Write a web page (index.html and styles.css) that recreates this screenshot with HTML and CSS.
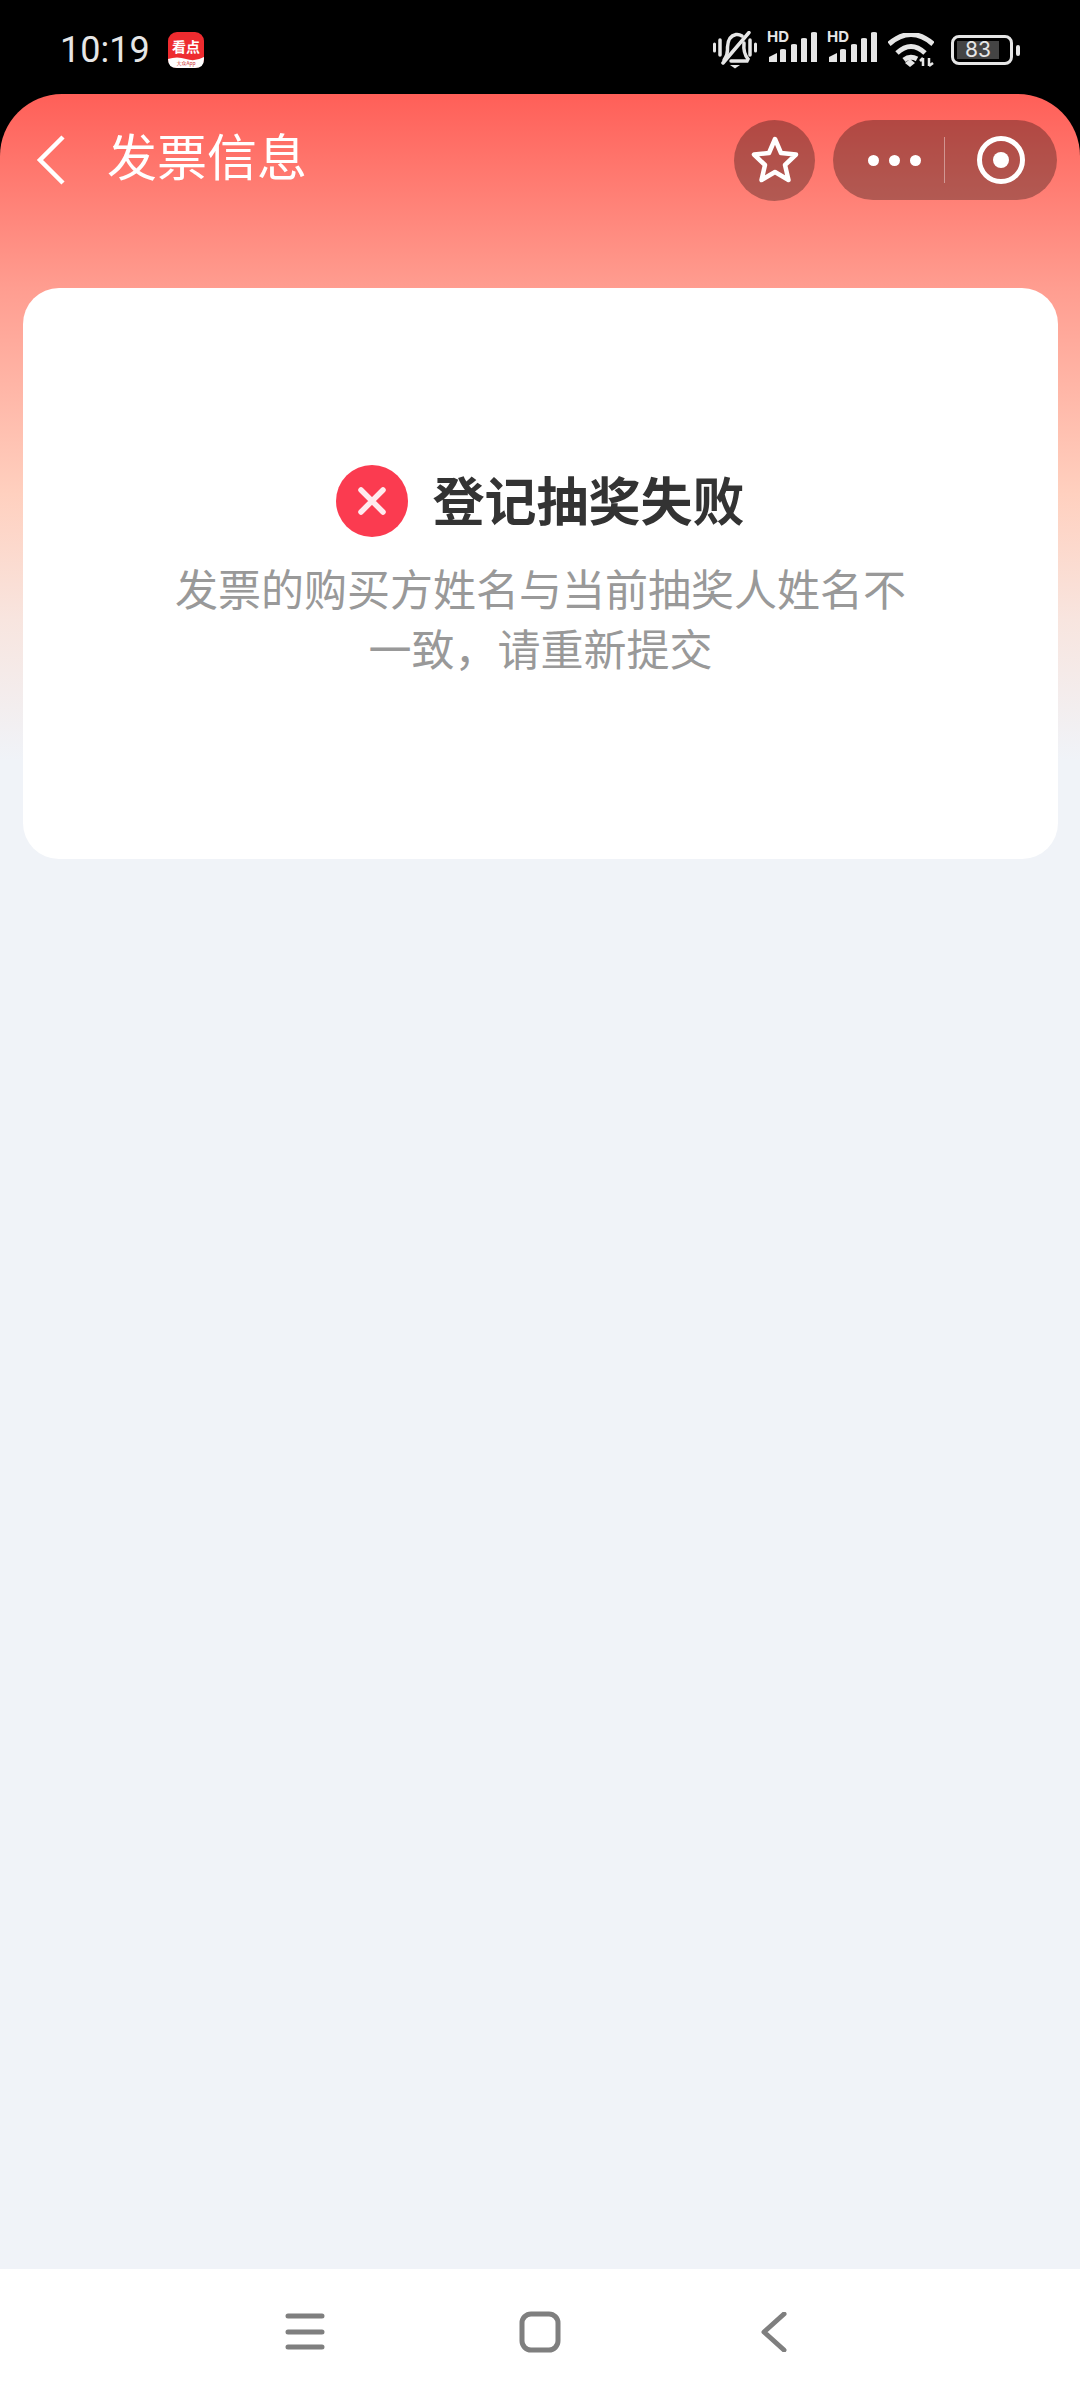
FILE: index.html
```html
<!DOCTYPE html>
<html lang="zh-CN">
<head>
    <meta charset="UTF-8">
    <meta name="viewport" content="width=device-width, initial-scale=1.0">
    <title>发票信息</title>
    <link rel="stylesheet" href="styles.css">
</head>
<body>
    <!-- Barra de estado -->
    <div class="status-bar">
        <span class="time">10:19</span>
        <svg class="app-icon" width="36" height="36" viewBox="0 0 36 36">
            <rect width="36" height="36" rx="9" fill="#ee2b2f"/>
            <path d="M0 27 Q9 24 18 27 T36 25 V27 Q36 36 27 36 H9 Q0 36 0 27 Z" fill="#fff"/>
            <text x="18" y="20" class="app-icon-text" text-anchor="middle">看点</text>
            <text x="18" y="33" class="app-icon-small" text-anchor="middle">大众App</text>
        </svg>
        <div class="status-icons">
            <svg class="icon-bell" width="44" height="38" viewBox="0 0 44 38" fill="none" stroke="#e6e6e6" stroke-linecap="round">
                <path d="M1.5 13 V20 M42.5 13 V20" stroke-width="3"/>
                <path d="M7 9 V24 M37 9 V24" stroke-width="3.5"/>
                <path d="M11 29 Q15 24 14.5 16 Q15 5 23 3.5 Q26 3 29 5 M31 12 Q30 22 35 28 L34 30 H18" stroke-width="3.5"/>
                <path d="M10 32 L36 1.5" stroke-width="3.5"/>
                <path d="M17 34 H27 L22 37.5 Z" fill="#e6e6e6" stroke="none"/>
            </svg>
            <svg class="icon-signal" width="50" height="42" viewBox="0 -4 50 42">
                <text x="0" y="13" class="hd-text">HD</text>
                <path d="M2 33 V28 L10 24 V33 Z M13 33 V21 Q13 20 16 20 Q19 20 19 21 V33 Z M24 33 V16 Q24 15 27 15 Q30 15 30 16 V33 Z M34 33 V10 Q34 9 37 9 Q40 9 40 10 V33 Z M44 33 V4 Q44 3 47 3 Q50 3 50 4 V33 Z" fill="#e6e6e6"/>
            </svg>
            <svg class="icon-signal" width="50" height="42" viewBox="0 -4 50 42">
                <text x="0" y="13" class="hd-text">HD</text>
                <path d="M2 33 V28 L10 24 V33 Z M13 33 V21 Q13 20 16 20 Q19 20 19 21 V33 Z M24 33 V16 Q24 15 27 15 Q30 15 30 16 V33 Z M34 33 V10 Q34 9 37 9 Q40 9 40 10 V33 Z M44 33 V4 Q44 3 47 3 Q50 3 50 4 V33 Z" fill="#e6e6e6"/>
            </svg>
            <svg class="icon-wifi" width="46" height="34" viewBox="0 0 46 34" fill="none" stroke="#e6e6e6" stroke-width="5">
                <path d="M1 11 Q23 -8 45 11"/>
                <path d="M9 20 Q23 7 37 20"/>
                <path d="M16 27 Q22 22 29 26"/>
                <path d="M17 30 L22 26 L27 30 L22 34 Z" fill="#e6e6e6" stroke="none"/>
                <path d="M35 25 V33 M32 28 L35 25 M41 25 V33 M41 33 L45 30" stroke-width="2.5"/>
            </svg>
            <div class="battery">
                <div class="battery-body">
                    <span class="battery-level">83</span>
                </div>
                <div class="battery-tip"></div>
            </div>
        </div>
    </div>

    <div class="page">
        <!-- Cabecera -->
        <header class="top-bar">
            <svg class="back-icon" width="30" height="50" viewBox="0 0 30 50" fill="none" stroke="#fff" stroke-width="4.5">
                <path d="M27 2 L4 25 L27 48"/>
            </svg>
            <h1 class="page-title">发票信息</h1>
            <div class="fav-button">
                <svg width="50" height="50" viewBox="0 0 50 50" fill="none" stroke="#fff" stroke-width="4.5" stroke-linejoin="round">
                    <path d="M25 4 L31 18 L46 19.5 L35 30 L38.5 45 L25 37 L11.5 45 L15 30 L4 19.5 L19 18 Z"/>
                </svg>
            </div>
            <div class="capsule">
                <div class="capsule-dots">
                    <span class="dot"></span>
                    <span class="dot"></span>
                    <span class="dot"></span>
                </div>
                <div class="capsule-line"></div>
                <div class="capsule-target">
                    <span class="target-dot"></span>
                </div>
            </div>
        </header>

        <!-- Resultado -->
        <section class="result-card">
            <div class="result-head">
                <svg width="72" height="72" viewBox="0 0 72 72">
                    <circle cx="36" cy="36" r="36" fill="#fb3b50"/>
                    <path d="M25 25 L47 47 M47 25 L25 47" stroke="#fff" stroke-opacity="0.9" stroke-width="5.5" stroke-linecap="round"/>
                </svg>
                <h2 class="result-title">登记抽奖失败</h2>
            </div>
            <p class="result-text">发票的购买方姓名与当前抽奖人姓名不一致，请重新提交</p>
        </section>
    </div>

    <!-- Navegación del sistema -->
    <nav class="system-nav">
        <svg width="40" height="40" viewBox="0 0 40 40" stroke="#7f7f7f" stroke-width="5" stroke-linecap="round">
            <path d="M3 4 H37 M3 20 H37 M3 35 H37"/>
        </svg>
        <svg width="42" height="42" viewBox="0 0 42 42" fill="none" stroke="#7f7f7f" stroke-width="5">
            <rect x="3" y="3" width="36" height="36" rx="9"/>
        </svg>
        <svg width="40" height="40" viewBox="0 0 40 40" fill="none" stroke="#7f7f7f" stroke-width="5" stroke-linecap="round" stroke-linejoin="round">
            <path d="M29 2 L9 20 L29 38"/>
        </svg>
    </nav>
</body>
</html>
```

FILE: styles.css
```css
/* Estilos generales */
body {
    margin: 0;
    padding: 0;
    height: 2400px;
    width: 1080px;
    overflow: hidden;
    display: flex;
    flex-direction: column;
    background-color: #000;
    font-family: "Noto Sans CJK SC", "Noto Sans", sans-serif;
}

/* Barra de estado */
.status-bar {
    height: 94px;
    flex-shrink: 0;
    display: flex;
    align-items: center;
    padding: 6px 60px 0;
    box-sizing: border-box;
    color: #e6e6e6;
}

.time {
    font-family: Roboto, sans-serif;
    font-size: 36px;
    width: 108px;
}

.app-icon-text {
    font-size: 14px;
    font-weight: 700;
    fill: #fff;
}

.app-icon-small {
    font-size: 5px;
    fill: #c33;
}

.status-icons {
    margin-left: auto;
    display: flex;
    align-items: center;
    gap: 10px;
}

.hd-text {
    font-family: Inter, sans-serif;
    font-size: 15px;
    font-weight: 700;
    fill: #e6e6e6;
}

.icon-signal {
    margin-top: -8px;
}

.icon-wifi {
    margin-left: 1px;
}

.battery {
    margin-left: 7px;
    display: flex;
    align-items: center;
    gap: 3px;
}

.battery-body {
    width: 62px;
    height: 30px;
    box-sizing: border-box;
    border: 3px solid #e6e6e6;
    border-radius: 8px;
    padding: 3px;
}

.battery-level {
    display: block;
    width: 42px;
    height: 18px;
    background-color: #444;
    font-family: Inter, sans-serif;
    font-size: 21px;
    line-height: 18px;
    text-align: center;
    color: #e6e6e6;
}

.battery-tip {
    width: 4px;
    height: 11px;
    background-color: #e6e6e6;
    border-radius: 2px;
}

/* Zona principal */
.page {
    flex: 1;
    border-radius: 62px 62px 0 0;
    background: linear-gradient(to bottom, #ff5f58 0, #ff9d90 194px, #ffd0bf 400px, #f8e5df 526px, #f0f3f8 666px);
}

.top-bar {
    display: flex;
    align-items: center;
    height: 80px;
    margin-top: 26px;
    padding: 0 23px 0 36px;
}

.back-icon {
    flex-shrink: 0;
}

.page-title {
    margin: 0 0 0 41px;
    font-size: 50px;
    font-weight: 400;
    color: #fff;
    position: relative;
    top: -6px;
}

.fav-button {
    margin-left: auto;
    width: 81px;
    height: 81px;
    border-radius: 50%;
    background-color: rgba(0, 0, 0, 0.3);
    display: flex;
    align-items: center;
    justify-content: center;
}

.capsule {
    margin-left: 18px;
    width: 224px;
    height: 80px;
    border-radius: 40px;
    background-color: rgba(0, 0, 0, 0.3);
    display: flex;
    align-items: center;
}

.capsule-dots {
    margin-left: 35px;
    display: flex;
    gap: 10px;
}

.dot {
    width: 11px;
    height: 11px;
    border-radius: 50%;
    background-color: #fff;
}

.capsule-line {
    margin-left: 23px;
    width: 1px;
    height: 46px;
    background-color: rgba(255, 255, 255, 0.4);
}

.capsule-target {
    margin-left: 32px;
    width: 48px;
    height: 48px;
    box-sizing: border-box;
    border: 5px solid #fff;
    border-radius: 50%;
    display: flex;
    align-items: center;
    justify-content: center;
}

.target-dot {
    width: 16px;
    height: 16px;
    border-radius: 50%;
    background-color: #fff;
}

/* Tarjeta de resultado */
.result-card {
    margin: 88px 22px 0 23px;
    height: 571px;
    box-sizing: border-box;
    padding-top: 177px;
    border-radius: 36px;
    background-color: #fff;
    display: flex;
    flex-direction: column;
    align-items: center;
}

.result-head {
    display: flex;
    align-items: center;
    gap: 24px;
}

.result-title {
    margin: 0;
    padding-bottom: 4px;
    font-size: 52px;
    font-weight: 700;
    line-height: 68px;
    color: #333;
}

.result-text {
    margin: 20px 0 0;
    width: 760px;
    font-size: 43px;
    line-height: 60px;
    text-align: center;
    color: #999;
}

/* Navegación del sistema */
.system-nav {
    height: 131px;
    flex-shrink: 0;
    box-sizing: border-box;
    padding-bottom: 6px;
    background-color: #fff;
    display: flex;
    align-items: center;
    justify-content: center;
    gap: 194px;
}
```
